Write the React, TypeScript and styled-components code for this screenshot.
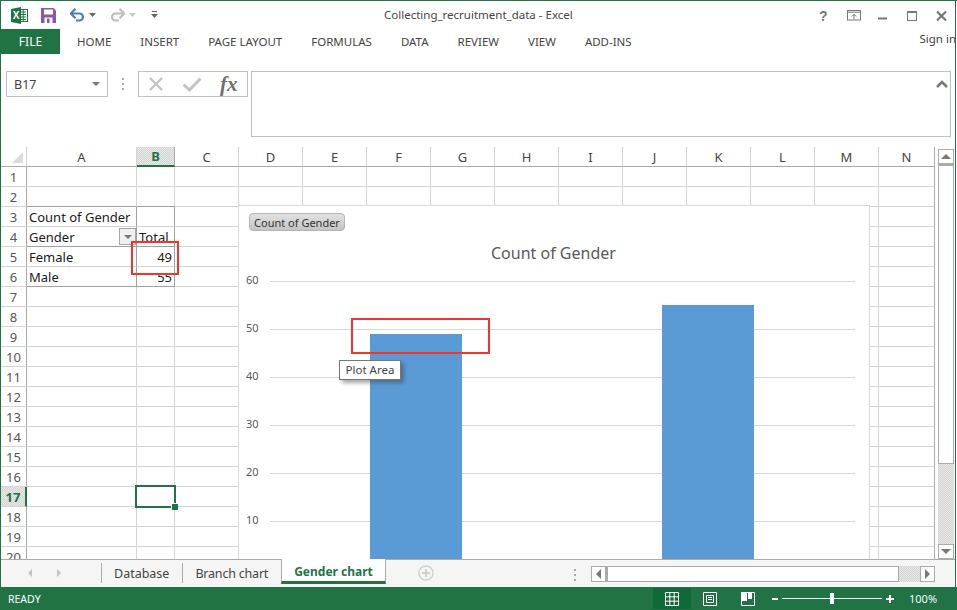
import styled, { createGlobalStyle } from "styled-components";

const GREEN = "#217346";
const UI_FONT = `"Noto Sans", "Open Sans", "Liberation Sans", sans-serif`;
const HATCH = `repeating-conic-gradient(#d4d4d4 0 25%, #e8e8e8 0 50%) 0 0 / 2px 2px`;
const PIVOT_LINE = "#a0a0a0";
const GRID_LINE = "#d4d4d4";

const columns = [
  { name: "A", width: 110 },
  { name: "B", width: 38 },
  { name: "C", width: 64 },
  { name: "D", width: 64 },
  { name: "E", width: 64 },
  { name: "F", width: 64 },
  { name: "G", width: 64 },
  { name: "H", width: 64 },
  { name: "I", width: 64 },
  { name: "J", width: 64 },
  { name: "K", width: 64 },
  { name: "L", width: 64 },
  { name: "M", width: 64 },
  { name: "N", width: 56 },
];
const rows = Array.from({ length: 20 }, (_, i) => i + 1);

const cellText: Record<string, string> = {
  A3: "Count of Gender",
  A4: "Gender",
  B4: "Total",
  A5: "Female",
  B5: "49",
  A6: "Male",
  B6: "55",
};
const rightAligned = ["B5", "B6"];
const pivotRight = ["A3", "A4", "A5", "A6", "B3", "B4", "B5", "B6"];
const pivotBottom = ["A2", "B2", "A4", "B4", "A6", "B6"];

const ribbonTabs = ["HOME", "INSERT", "PAGE LAYOUT", "FORMULAS", "DATA", "REVIEW", "VIEW", "ADD-INS"];
const sheetTabs = ["Database", "Branch chart", "Gender chart"];
const axisTicks = [60, 50, 40, 30, 20, 10];

const GlobalStyle = createGlobalStyle`
  html, body {
    margin: 0;
    padding: 0;
    background: #fff;
  }
  * {
    box-sizing: border-box;
  }
`;

const Window = styled.div`
  position: relative;
  width: 957px;
  height: 610px;
  display: flex;
  flex-direction: column;
  overflow: hidden;
  background: #fff;
  font-family: ${UI_FONT};
  color: #444;
  border-top: 1px solid ${GREEN};
  &::before {
    content: "";
    position: absolute;
    left: 0;
    top: 0;
    bottom: 0;
    width: 1px;
    background: ${GREEN};
  }
  &::after {
    content: "";
    position: absolute;
    left: 955px;
    top: 0;
    bottom: 0;
    width: 1px;
    background: ${GREEN};
  }
`;

const TitleBar = styled.div`
  height: 28px;
  flex: none;
  display: flex;
  align-items: center;
  padding-left: 11px;
  position: relative;
`;

const QuickAccess = styled.div`
  display: flex;
  align-items: center;
`;

const QuickIcon = styled.svg<{ $gap: number }>`
  display: block;
  flex: none;
  margin-right: ${({ $gap }) => $gap}px;
`;

const TitleText = styled.div`
  position: absolute;
  left: 384px;
  top: 5px;
  font-size: 11.5px;
  line-height: 18px;
  color: #444;
  white-space: nowrap;
`;

const WindowControls = styled.div`
  position: absolute;
  left: 818px;
  top: 8px;
  display: flex;
  align-items: center;
  gap: 17px;
`;

const RibbonBar = styled.div`
  height: 25px;
  flex: none;
  display: flex;
  align-items: center;
  padding-left: 1px;
  padding-right: 1px;
`;

const FileTab = styled.div`
  width: 59px;
  height: 25px;
  background: ${GREEN};
  color: #fff;
  font-size: 12px;
  display: flex;
  align-items: center;
  justify-content: center;
  margin-right: 17px;
`;

const RibbonTab = styled.div`
  font-size: 11.5px;
  margin-right: 29px;
  color: #444;
  white-space: nowrap;
`;

const SignIn = styled.div`
  margin-left: auto;
  font-size: 11.5px;
  align-self: flex-start;
  margin-top: 2px;
  color: #444;
  white-space: nowrap;
`;

const FormulaRow = styled.div`
  height: 66px;
  margin: 17px 6px 10px 6px;
  flex: none;
  display: flex;
  align-items: flex-start;
`;

const NameBox = styled.div`
  width: 102px;
  height: 26px;
  border: 1px solid #c0c0c0;
  display: flex;
  align-items: center;
  justify-content: space-between;
  padding: 0 7px;
  font-size: 12.5px;
  color: #444;
`;

const Caret = styled.span`
  width: 0;
  height: 0;
  border-left: 4px solid transparent;
  border-right: 4px solid transparent;
  border-top: 4px solid #777;
`;

const Dots = styled.div`
  width: 30px;
  height: 26px;
  display: flex;
  flex-direction: column;
  align-items: center;
  justify-content: center;
  gap: 3px;
  flex: none;
  & > i {
    width: 2px;
    height: 2px;
    background: #aaa;
  }
`;

const FxBox = styled.div`
  width: 110px;
  height: 26px;
  flex: none;
  border: 1px solid #c0c0c0;
  display: flex;
  align-items: center;
  padding-left: 9px;
  gap: 18px;
  margin-right: 3px;
`;

const FxGlyph = styled.span`
  font-family: "Liberation Serif", serif;
  font-style: italic;
  font-weight: 700;
  font-size: 21px;
  line-height: 24px;
  color: #707070;
`;

const FormulaInput = styled.div`
  flex: 1;
  height: 66px;
  border: 1px solid #c0c0c0;
  display: flex;
  justify-content: flex-end;
  padding: 8px 2px 0 0;
`;

const SheetArea = styled.div`
  height: 412px;
  flex: none;
  display: flex;
  padding-left: 1px;
`;

const Sheet = styled.div`
  position: relative;
  width: 934px;
  height: 412px;
  overflow: hidden;
  border-right: 1px solid #ababab;
  flex: none;
`;

const SheetGrid = styled.div`
  display: grid;
  grid-template-columns: 26px ${columns.map((c) => `${c.width}px`).join(" ")};
  grid-auto-rows: 20px;
  font-size: 13px;
`;

const Corner = styled.div`
  border-right: 1px solid ${GRID_LINE};
  border-bottom: 1px solid #ababab;
  position: relative;
  &::after {
    content: "";
    position: absolute;
    right: 3px;
    bottom: 3px;
    border-style: solid;
    border-width: 0 0 11px 11px;
    border-color: transparent transparent #dcdcdc transparent;
  }
`;

const ColumnHead = styled.div<{ $active?: boolean }>`
  display: flex;
  align-items: center;
  justify-content: center;
  font-size: 13px;
  font-weight: ${({ $active }) => ($active ? 700 : 400)};
  color: ${({ $active }) => ($active ? GREEN : "#444")};
  background: ${({ $active }) => ($active ? HATCH : "#fff")};
  border-right: 1px solid ${({ $active }) => ($active ? "#ababab" : GRID_LINE)};
  border-bottom: ${({ $active }) => ($active ? `2px solid ${GREEN}` : "1px solid #ababab")};
`;

const RowHead = styled.div<{ $active?: boolean }>`
  display: flex;
  align-items: center;
  justify-content: center;
  font-size: 13px;
  font-weight: ${({ $active }) => ($active ? 700 : 400)};
  color: ${({ $active }) => ($active ? GREEN : "#555")};
  background: ${({ $active }) => ($active ? HATCH : "#fff")};
  border-right: ${({ $active }) => ($active ? `2px solid ${GREEN}` : "1px solid #ababab")};
  border-bottom: 1px solid ${GRID_LINE};
`;

const Cell = styled.div<{ $right?: boolean; $edgeRight?: boolean; $edgeBottom?: boolean; $selected?: boolean }>`
  border-right: 1px solid ${({ $edgeRight }) => ($edgeRight ? PIVOT_LINE : GRID_LINE)};
  border-bottom: 1px solid ${({ $edgeBottom }) => ($edgeBottom ? PIVOT_LINE : GRID_LINE)};
  padding: 0 2px;
  display: flex;
  align-items: center;
  justify-content: ${({ $right }) => ($right ? "flex-end" : "flex-start")};
  color: #1a1a1a;
  white-space: nowrap;
  position: relative;
  ${({ $selected }) =>
    $selected
      ? `&::before {
           content: "";
           position: absolute;
           left: -2px;
           top: -2px;
           right: -2px;
           bottom: -2px;
           border: 2px solid ${GREEN};
           z-index: 2;
         }
         &::after {
           content: "";
           position: absolute;
           right: -4px;
           bottom: -4px;
           width: 6px;
           height: 6px;
           background: ${GREEN};
           border-left: 1px solid #fff;
           border-top: 1px solid #fff;
           z-index: 2;
         }`
      : ""}
`;

const FilterButton = styled.div`
  position: absolute;
  right: 0;
  top: 1px;
  width: 17px;
  height: 17px;
  background: #f0f0f0;
  border: 1px solid #a8a8a8;
  display: flex;
  align-items: center;
  justify-content: center;
`;

const Chart = styled.div`
  position: absolute;
  left: 237px;
  top: 58px;
  width: 632px;
  height: 354px;
  background: #fff;
  border: 1px solid #d9d9d9;
  border-bottom: none;
  z-index: 3;
`;

const FieldPill = styled.div`
  position: absolute;
  left: 10px;
  top: 7px;
  height: 18px;
  width: 96px;
  display: flex;
  align-items: center;
  justify-content: center;
  font-size: 11px;
  color: #333;
  border: 1px solid #b4b4b4;
  border-radius: 4px;
  background: linear-gradient(#e2e2e2, #c4c4c4);
  white-space: nowrap;
`;

const ChartTitle = styled.div`
  position: absolute;
  left: 252px;
  top: 35px;
  font-size: 16px;
  line-height: 24px;
  color: #595959;
  white-space: nowrap;
`;

const PlotSvg = styled.svg`
  display: block;
  font-family: ${UI_FONT};
`;

const ChartTip = styled.div`
  position: absolute;
  left: 100px;
  top: 154px;
  width: 62px;
  height: 20px;
  padding-bottom: 1px;
  background: #fff;
  border: 1px solid #767676;
  box-shadow: 3px 3px 4px rgba(60, 60, 60, 0.45);
  font-size: 11.5px;
  color: #444;
  display: flex;
  align-items: center;
  justify-content: center;
  white-space: nowrap;
`;

const VScroll = styled.div`
  width: 16px;
  height: 412px;
  margin-left: 3px;
  flex: none;
  display: flex;
  flex-direction: column;
  padding-top: 2px;
`;

const ScrollButton = styled.div<{ $w?: number; $h?: number }>`
  width: ${({ $w }) => $w ?? 16}px;
  height: ${({ $h }) => $h ?? 15}px;
  flex: none;
  background: #fff;
  border: 1px solid #ababab;
  display: flex;
  align-items: center;
  justify-content: center;
`;

const VThumb = styled.div`
  height: 300px;
  flex: none;
  background: #fff;
  border: 1px solid #ababab;
  border-top: 2px solid #ababab;
`;

const ScrollTrack = styled.div`
  flex: 1;
  background: ${HATCH};
`;

const Arrow = styled.span<{ $dir: "up" | "down" | "left" | "right" }>`
  width: 0;
  height: 0;
  border-style: solid;
  ${({ $dir }) =>
    $dir === "up"
      ? "border-width: 0 5px 5px 5px; border-color: transparent transparent #777 transparent;"
      : $dir === "down"
        ? "border-width: 5px 5px 0 5px; border-color: #777 transparent transparent transparent;"
        : $dir === "left"
          ? "border-width: 5px 5px 5px 0; border-color: transparent #777 transparent transparent;"
          : "border-width: 5px 0 5px 5px; border-color: transparent transparent transparent #777;"}
`;

const NavArrow = styled.span<{ $dir: "left" | "right" }>`
  width: 0;
  height: 0;
  border-style: solid;
  margin-right: 25px;
  ${({ $dir }) =>
    $dir === "left"
      ? "border-width: 4px 4px 4px 0; border-color: transparent #c4c4c4 transparent transparent;"
      : "border-width: 4px 0 4px 4px; border-color: transparent transparent transparent #c4c4c4;"}
`;

const TabBar = styled.div`
  height: 28px;
  flex: none;
  margin: 0 1px;
  background: #f5f5f5;
  border-top: 1px solid #ababab;
  display: flex;
  align-items: flex-start;
  padding-left: 27px;
  position: relative;
`;

const TabNav = styled.div`
  width: 73px;
  height: 26px;
  display: flex;
  align-items: center;
`;

const SheetTab = styled.div<{ $active?: boolean }>`
  height: ${({ $active }) => ($active ? "25px" : "20px")};
  margin-top: ${({ $active }) => ($active ? "-1px" : "3px")};
  padding: ${({ $active }) => ($active ? "2px 12px 0" : "0 13px 0 12px")};
  display: flex;
  align-items: center;
  font-size: ${({ $active }) => ($active ? "12px" : "12.5px")};
  white-space: nowrap;
  color: ${({ $active }) => ($active ? GREEN : "#444")};
  font-weight: ${({ $active }) => ($active ? 700 : 400)};
  background: ${({ $active }) => ($active ? "#fff" : "transparent")};
  border-left: 1px solid #ababab;
  border-right: ${({ $active }) => ($active ? "1px solid #ababab" : "none")};
  border-bottom: ${({ $active }) => ($active ? `3px solid ${GREEN}` : "none")};
`;

const BranchSpacer = styled.span`
  letter-spacing: -0.2px;
`;

const AddSheet = styled.svg`
  display: block;
  margin: 5px 0 0 32px;
  flex: none;
`;

const TabDots = styled.div`
  position: absolute;
  left: 573px;
  top: 9px;
  display: flex;
  flex-direction: column;
  gap: 3px;
  & > i {
    width: 2px;
    height: 2px;
    background: #aaa;
  }
`;

const HScroll = styled.div`
  position: absolute;
  left: 590px;
  top: 6px;
  width: 344px;
  height: 16px;
  display: flex;
`;

const HThumb = styled.div`
  width: 293px;
  background: #fff;
  border: 1px solid #ababab;
  border-left: 2px solid #ababab;
`;

const StatusBar = styled.div`
  height: 23px;
  flex: none;
  background: ${GREEN};
  color: #fff;
  display: flex;
  align-items: center;
  font-size: 10.5px;
  padding-left: 8px;
  position: relative;
`;

const StatusRight = styled.div`
  position: absolute;
  left: 653px;
  top: 1px;
  height: 21px;
  display: flex;
  align-items: center;
`;

const ViewButton = styled.div<{ $active?: boolean }>`
  width: 38px;
  height: 21px;
  display: flex;
  align-items: center;
  justify-content: center;
  background: ${({ $active }) => ($active ? "#0f6a3a" : "transparent")};
`;

const ZoomControl = styled.div`
  display: flex;
  align-items: center;
  margin-left: 5px;
`;

const ZoomSign = styled.div<{ $w: number; $plus?: boolean }>`
  width: ${({ $w }) => $w}px;
  height: 2px;
  background: #fff;
  position: relative;
  ${({ $plus }) =>
    $plus
      ? `&::after {
           content: "";
           position: absolute;
           left: 3px;
           top: -3px;
           width: 2px;
           height: 8px;
           background: #fff;
         }`
      : ""}
`;

const ZoomTrack = styled.div`
  width: 100px;
  height: 1px;
  background: #fff;
  margin: 0 4px 0 4px;
  position: relative;
  &::after {
    content: "";
    position: absolute;
    left: 48px;
    top: -5px;
    width: 4px;
    height: 11px;
    background: #fff;
  }
`;

const ZoomLabel = styled.div`
  font-size: 11px;
  margin-left: 15px;
  opacity: 0.95;
`;

const RedBox = styled.div<{ $x: number; $y: number; $w: number; $h: number }>`
  position: absolute;
  left: ${({ $x }) => $x}px;
  top: ${({ $y }) => $y}px;
  width: ${({ $w }) => $w}px;
  height: ${({ $h }) => $h}px;
  border: 2px solid #f03434;
  z-index: 5;
`;

function ExcelLogo() {
  return (
    <QuickIcon $gap={13} width="17" height="17" viewBox="0 0 17 17">
      <rect x="7" y="2.5" width="9.5" height="12" fill="#fff" stroke={GREEN} />
      <path d="M10 5h5M10 7.5h5M10 10h5M10 12.5h5M12.2 3v11" stroke={GREEN} strokeWidth="1" />
      <path d="M0 2l10-2v17L0 15z" fill={GREEN} />
      <text x="1.8" y="12" fontSize="10" fontWeight="700" fill="#fff" fontFamily="Liberation Sans">
        X
      </text>
    </QuickIcon>
  );
}

function SaveIcon() {
  return (
    <QuickIcon $gap={14} width="15" height="15" viewBox="0 0 15 15">
      <path d="M0 0h12.5L15 2.5V15H0z" fill="#8a55ad" />
      <rect x="3" y="1.5" width="9" height="5" fill="#fff" />
      <rect x="3.5" y="9.5" width="8" height="5.5" fill="#fff" />
      <rect x="6" y="10.5" width="2.5" height="4.5" fill="#8a55ad" />
    </QuickIcon>
  );
}

function UndoIcon({ color, flip }: { color: string; flip?: boolean }) {
  return (
    <QuickIcon
      $gap={4}
      width="15"
      height="14"
      viewBox="0 0 15 14"
      style={flip ? { transform: "scaleX(-1)" } : undefined}
    >
      <path d="M1 5.5h8.5a3.5 3.5 0 0 1 0 7H6" fill="none" stroke={color} strokeWidth="2.2" />
      <path d="M5.5 .8L.8 5.5l4.7 4.7" fill="none" stroke={color} strokeWidth="2.2" />
    </QuickIcon>
  );
}

function MiniCaret({ color, gap }: { color: string; gap: number }) {
  return (
    <QuickIcon $gap={gap} width="7" height="4" viewBox="0 0 7 4">
      <path d="M0 0h7L3.5 4z" fill={color} />
    </QuickIcon>
  );
}

function CustomizeIcon() {
  return (
    <QuickIcon $gap={0} width="7" height="8" viewBox="0 0 7 8">
      <path d="M1 .5h5" stroke="#666" />
      <path d="M0 3h7L3.5 7z" fill="#666" />
    </QuickIcon>
  );
}

function WindowIcons() {
  return (
    <WindowControls>
      <svg width="12" height="14" viewBox="0 0 12 14">
        <text x="1" y="12" fontSize="14" fontWeight="700" fill="#777" fontFamily="Liberation Sans">
          ?
        </text>
      </svg>
      <svg width="14" height="12" viewBox="0 0 14 12">
        <rect x=".5" y=".5" width="13" height="9.5" fill="none" stroke="#777" />
        <path d="M.5 2.2h13" stroke="#777" />
        <path d="M7 9V4.5M4.8 6.5L7 4.3l2.2 2.2" fill="none" stroke="#777" />
      </svg>
      <svg width="12" height="12" viewBox="0 0 12 12">
        <rect x="0" y="7.5" width="9" height="2" fill="#777" />
      </svg>
      <svg width="12" height="12" viewBox="0 0 12 12">
        <rect x=".5" y="1.5" width="9" height="9" fill="none" stroke="#777" />
        <rect x="0" y="1" width="10" height="2" fill="#777" />
      </svg>
      <svg width="11" height="12" viewBox="0 0 11 12">
        <path d="M1 1.5l9 9M10 1.5l-9 9" stroke="#777" strokeWidth="2.2" />
      </svg>
    </WindowControls>
  );
}

function GenderChart() {
  return (
    <Chart>
      <FieldPill>Count of Gender</FieldPill>
      <ChartTitle>Count of Gender</ChartTitle>
      <PlotSvg width="630" height="354" viewBox="0 0 630 354">
        {axisTicks.map((tick, i) => {
          const y = 75.5 + i * 48;
          return (
            <g key={tick}>
              <line x1="31" x2="616" y1={y} y2={y} stroke="#d9d9d9" />
              <text x="7" y={y + 2.5} fontSize="11" fill="#595959">
                {tick}
              </text>
            </g>
          );
        })}
        <rect x="131" y="128" width="92" height="226" fill="#5b9bd5" />
        <rect x="423" y="99" width="92" height="255" fill="#5b9bd5" />
      </PlotSvg>
      <ChartTip>Plot Area</ChartTip>
    </Chart>
  );
}

function RowCells({ row }: { row: number }) {
  return (
    <>
      <RowHead $active={row === 17}>{row}</RowHead>
      {columns.map((c) => {
        const key = `${c.name}${row}`;
        return (
          <Cell
            key={key}
            $right={rightAligned.includes(key)}
            $edgeRight={pivotRight.includes(key)}
            $edgeBottom={pivotBottom.includes(key)}
            $selected={key === "B17"}
          >
            {cellText[key]}
            {key === "A4" && (
              <FilterButton>
                <Caret />
              </FilterButton>
            )}
          </Cell>
        );
      })}
    </>
  );
}

function Grid() {
  return (
    <SheetGrid>
      <Corner />
      {columns.map((c) => (
        <ColumnHead key={c.name} $active={c.name === "B"}>
          {c.name}
        </ColumnHead>
      ))}
      {rows.map((r) => (
        <RowCells key={r} row={r} />
      ))}
    </SheetGrid>
  );
}

export default function App() {
  return (
    <Window>
      <GlobalStyle />
      <TitleBar>
        <QuickAccess>
          <ExcelLogo />
          <SaveIcon />
          <UndoIcon color="#4a7db8" />
          <MiniCaret color="#666" gap={14} />
          <UndoIcon color="#bdbdbd" flip />
          <MiniCaret color="#c8c8c8" gap={15} />
          <CustomizeIcon />
        </QuickAccess>
        <TitleText>Collecting_recruitment_data - Excel</TitleText>
        <WindowIcons />
      </TitleBar>

      <RibbonBar>
        <FileTab>FILE</FileTab>
        {ribbonTabs.map((t) => (
          <RibbonTab key={t}>{t}</RibbonTab>
        ))}
        <SignIn>Sign in</SignIn>
      </RibbonBar>

      <FormulaRow>
        <NameBox>
          B17
          <Caret />
        </NameBox>
        <Dots>
          <i />
          <i />
          <i />
        </Dots>
        <FxBox>
          <svg width="16" height="16" viewBox="0 0 16 16">
            <path d="M2 2l12 12M14 2L2 14" stroke="#c4c4c4" strokeWidth="2.4" />
          </svg>
          <svg width="20" height="16" viewBox="0 0 20 16">
            <path d="M1.5 8.5l6 5.5L18.5 2.5" fill="none" stroke="#c4c4c4" strokeWidth="3" />
          </svg>
          <FxGlyph>fx</FxGlyph>
        </FxBox>
        <FormulaInput>
          <svg width="12" height="8" viewBox="0 0 12 8">
            <path d="M1 7l5-5 5 5" fill="none" stroke="#777" strokeWidth="2.6" />
          </svg>
        </FormulaInput>
      </FormulaRow>

      <SheetArea>
        <Sheet>
          <Grid />
          <GenderChart />
        </Sheet>
        <VScroll>
          <ScrollButton>
            <Arrow $dir="up" />
          </ScrollButton>
          <VThumb />
          <ScrollTrack />
          <ScrollButton>
            <Arrow $dir="down" />
          </ScrollButton>
        </VScroll>
      </SheetArea>

      <TabBar>
        <TabNav>
          <NavArrow $dir="left" />
          <NavArrow $dir="right" />
        </TabNav>
        {sheetTabs.map((t) => (
          <SheetTab key={t} $active={t === "Gender chart"}>
            {t === "Branch chart" ? <BranchSpacer>{t}</BranchSpacer> : t}
          </SheetTab>
        ))}
        <AddSheet width="16" height="16" viewBox="0 0 16 16">
          <circle cx="8" cy="8" r="7" fill="none" stroke="#cfcfcf" strokeWidth="1.4" />
          <path d="M8 4v8M4 8h8" stroke="#cfcfcf" strokeWidth="2" />
        </AddSheet>
        <TabDots>
          <i />
          <i />
          <i />
        </TabDots>
        <HScroll>
          <ScrollButton $w={15} $h={16}>
            <Arrow $dir="left" />
          </ScrollButton>
          <HThumb />
          <ScrollTrack />
          <ScrollButton $w={15} $h={16}>
            <Arrow $dir="right" />
          </ScrollButton>
        </HScroll>
      </TabBar>

      <StatusBar>
        READY
        <StatusRight>
          <ViewButton $active>
            <svg width="14" height="14" viewBox="0 0 14 14">
              <path d="M.5.5h13v13H.5zM.5 4.8h13M.5 9.2h13M4.8.5v13M9.2.5v13" fill="none" stroke="#fff" />
            </svg>
          </ViewButton>
          <ViewButton>
            <svg width="14" height="14" viewBox="0 0 14 14">
              <path d="M.5.5h13v13H.5z" fill="none" stroke="#fff" />
              <path d="M3.5 3.5h7v7h-7zM5 5.5h4M5 7.5h4" fill="none" stroke="#fff" />
            </svg>
          </ViewButton>
          <ViewButton>
            <svg width="14" height="14" viewBox="0 0 14 14">
              <path d="M.5.5h13v13H.5z" fill="none" stroke="#fff" />
              <rect x="0" y="0" width="6" height="9" fill="#fff" />
              <rect x="7" y="0" width="4" height="7" fill="#fff" />
            </svg>
          </ViewButton>
          <ZoomControl>
            <ZoomSign $w={6} />
            <ZoomTrack />
            <ZoomSign $w={8} $plus />
          </ZoomControl>
          <ZoomLabel>100%</ZoomLabel>
        </StatusRight>
      </StatusBar>

      <RedBox $x={131} $y={240} $w={48} $h={34} />
      <RedBox $x={351} $y={317} $w={139} $h={36} />
    </Window>
  );
}
